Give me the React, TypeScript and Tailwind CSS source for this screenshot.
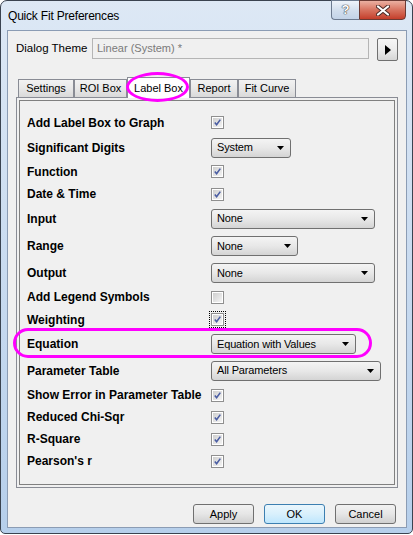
import React from 'react';

type Ctrl =
  | { kind: 'check'; checked: boolean; focus?: boolean }
  | { kind: 'select'; value: string; w: string };

type Row = { label: string; h: string; ctrl: Ctrl };

const rows: Row[] = [
  { label: 'Add Label Box to Graph', h: 'h-[25px]', ctrl: { kind: 'check', checked: true } },
  { label: 'Significant Digits', h: 'h-[25px]', ctrl: { kind: 'select', value: 'System', w: 'w-[80px]' } },
  { label: 'Function', h: 'h-[23px]', ctrl: { kind: 'check', checked: true } },
  { label: 'Date & Time', h: 'h-[22px]', ctrl: { kind: 'check', checked: true } },
  { label: 'Input', h: 'h-[27px]', ctrl: { kind: 'select', value: 'None', w: 'w-[164px]' } },
  { label: 'Range', h: 'h-[28px]', ctrl: { kind: 'select', value: 'None', w: 'w-[87px]' } },
  { label: 'Output', h: 'h-[26px]', ctrl: { kind: 'select', value: 'None', w: 'w-[164px]' } },
  { label: 'Add Legend Symbols', h: 'h-[22px]', ctrl: { kind: 'check', checked: false } },
  { label: 'Weighting', h: 'h-[23px]', ctrl: { kind: 'check', checked: true, focus: true } },
  { label: 'Equation', h: 'h-[26px]', ctrl: { kind: 'select', value: 'Equation with Values', w: 'w-[145px]' } },
  { label: 'Parameter Table', h: 'h-[27px]', ctrl: { kind: 'select', value: 'All Parameters', w: 'w-[170px]' } },
  { label: 'Show Error in Parameter Table', h: 'h-[22px]', ctrl: { kind: 'check', checked: true } },
  { label: 'Reduced Chi-Sqr', h: 'h-[22px]', ctrl: { kind: 'check', checked: true } },
  { label: 'R-Square', h: 'h-[22px]', ctrl: { kind: 'check', checked: true } },
  { label: "Pearson's r", h: 'h-[22px]', ctrl: { kind: 'check', checked: true } },
];

const tabs = [
  { name: 'Settings', w: 'w-[56px]' },
  { name: 'ROI Box', w: 'w-[53px]' },
  { name: 'Label Box', w: 'w-[63px]', active: true },
  { name: 'Report', w: 'w-[48px]' },
  { name: 'Fit Curve', w: 'w-[58px]' },
];

function CheckBox({ checked, focus }: { checked: boolean; focus?: boolean }) {
  return (
    <div className={focus ? 'outline-1 outline-dotted outline-black outline-offset-1' : ''}>
      <div className="w-[13px] h-[13px] border border-[#8f8f8f] bg-white p-px">
        <div className="w-full h-full bg-gradient-to-br from-[#cfcfcf] to-[#f4f4f4] flex items-center justify-center">
          {checked && (
            <svg width="9" height="9" viewBox="0 0 9 9">
              <path d="M1.8 4.6 L3.6 6.8 L7.3 1.6" fill="none" stroke="#4a5da3" strokeWidth="1.6" />
            </svg>
          )}
        </div>
      </div>
    </div>
  );
}

function Select({ value, w }: { value: string; w: string }) {
  return (
    <div
      className={`${w} h-[20px] rounded-[3px] border border-[#707070] bg-gradient-to-b from-[#f4f4f4] via-[#e8e8e8] to-[#d4d4d4] flex items-center justify-between pl-[5px] pr-[6px] text-[11px] text-black tracking-[-0.15px]`}
    >
      <span>{value}</span>
      <svg width="7" height="4" viewBox="0 0 7 4">
        <path d="M0 0 H7 L3.5 4 Z" fill="#000" />
      </svg>
    </div>
  );
}

function Button({ label, primary }: { label: string; primary?: boolean }) {
  return (
    <div
      className={
        primary
          ? 'w-[61px] h-[20px] rounded-[3px] border border-[#3c7fb1] bg-gradient-to-b from-[#eaf6fd] via-[#d9f0fc] to-[#bee6fd] flex items-center justify-center text-[11px] text-black'
          : 'w-[61px] h-[20px] rounded-[3px] border border-[#707070] bg-gradient-to-b from-[#f2f2f2] via-[#e6e6e6] to-[#d0d0d0] flex items-center justify-center text-[11px] text-black'
      }
    >
      {label}
    </div>
  );
}

export default function App() {
  return (
    <div className="w-[413px] h-[535px] bg-white font-['Liberation_Sans',Arial,sans-serif]">
      <div className="relative w-[413px] h-[534px] rounded-t-[7px] rounded-b-[5px] border border-[#3a4350] bg-gradient-to-b from-[#dde8f5] via-[#c9dbf0] to-[#b6cfeb] flex flex-col pl-[6px] pr-[5px] pb-[5px]">
        {/* Title bar */}
        <div className="h-[29px] flex items-start justify-between">
          <div className="pl-[1px] pt-[6px] text-[12px] text-black tracking-[-0.2px]">Quick Fit Preferences</div>
          <div className="flex mr-[1px] -mt-px">
            <div className="w-[28px] h-[20px] rounded-bl-[4px] border border-[#6c7a8f] border-r-0 bg-gradient-to-b from-[#eef3fa] via-[#d3dfee] to-[#c3d3e8] flex items-center justify-center">
              <span className="text-[13px] font-bold text-white [text-shadow:0_0_1px_#444,0_0_1px_#444,0_0_1px_#444]">?</span>
            </div>
            <div className="w-[47px] h-[20px] rounded-br-[4px] border border-[#6b3a34] bg-gradient-to-b from-[#eab0a2] via-[#d7725f] to-[#c43d2a] flex items-center justify-center">
              <svg width="14" height="11" viewBox="0 0 14 11">
                <path d="M2 1.5 L12 9.5 M12 1.5 L2 9.5" stroke="#4a2a26" strokeWidth="4" strokeLinecap="round" />
                <path d="M2 1.5 L12 9.5 M12 1.5 L2 9.5" stroke="#fff" strokeWidth="2.2" strokeLinecap="round" />
              </svg>
            </div>
          </div>
        </div>

        {/* Client area */}
        <div className="flex-1 border border-[#8b9cb4] bg-[#f0f0f0] flex flex-col">
          {/* Dialog theme */}
          <div className="flex items-start pl-[8px] pt-[7px]">
            <div className="w-[76px] h-[21px] flex items-center text-[11.5px] text-black">Dialog Theme</div>
            <div className="w-[277px] h-[21px] border border-[#b5b5b5] bg-[#f0f0f0] flex items-center pl-[4px] text-[11px] text-[#7a7a7a]">
              Linear (System) *
            </div>
            <div className="ml-[8px] w-[21px] h-[23px] rounded-[2px] border border-[#707070] bg-gradient-to-b from-[#f6f6f6] via-[#ececec] to-[#d6d6d6] flex items-center justify-center">
              <svg width="6" height="10" viewBox="0 0 6 10">
                <path d="M0 0 L6 5 L0 10 Z" fill="#000" />
              </svg>
            </div>
          </div>

          {/* Tabs */}
          <div className="mt-[16px] ml-[10px] h-[20px] flex items-end">
            {tabs.map((t) =>
              t.active ? (
                <div
                  key={t.name}
                  className={`${t.w} h-[21px] -mb-px relative z-10 border border-b-0 border-[#898c95] bg-white flex items-center justify-center text-[11px] text-black`}
                >
                  {t.name}
                </div>
              ) : (
                <div
                  key={t.name}
                  className={`${t.w} h-[18px] border border-b-0 border-[#898c95] bg-gradient-to-b from-[#f2f2f2] via-[#e8e8e8] to-[#d9d9d9] flex items-center justify-center text-[11px] text-black`}
                >
                  {t.name}
                </div>
              ),
            )}
          </div>

          {/* Tab panel */}
          <div className="ml-[8px] w-[382px] h-[391px] border border-[#898c95] bg-[#f0f0f0] p-[2px]">
            <div className="h-full border border-[#808080] pt-[9px] pl-[7px]">
              {rows.map((r) => (
                <div key={r.label} className={`${r.h} flex items-center`}>
                  <div className="w-[184px] text-[12px] font-bold text-black">{r.label}</div>
                  {r.ctrl.kind === 'check' ? (
                    <CheckBox checked={r.ctrl.checked} focus={r.ctrl.focus} />
                  ) : (
                    <Select value={r.ctrl.value} w={r.ctrl.w} />
                  )}
                </div>
              ))}
            </div>
          </div>

          {/* Buttons */}
          <div className="mt-[16px] flex justify-end gap-[10px] pr-[10px]">
            <Button label="Apply" />
            <Button label="OK" primary />
            <Button label="Cancel" />
          </div>
        </div>

        {/* Annotation marks */}
        <div className="absolute left-[125px] top-[71px] w-[63px] h-[30px] rounded-[50%] border-[3px] border-[#ff00ff] z-20" />
        <div className="absolute left-[12px] top-[327px] w-[359px] h-[30px] rounded-full border-[3px] border-[#ff00ff] z-20" />
      </div>
    </div>
  );
}
